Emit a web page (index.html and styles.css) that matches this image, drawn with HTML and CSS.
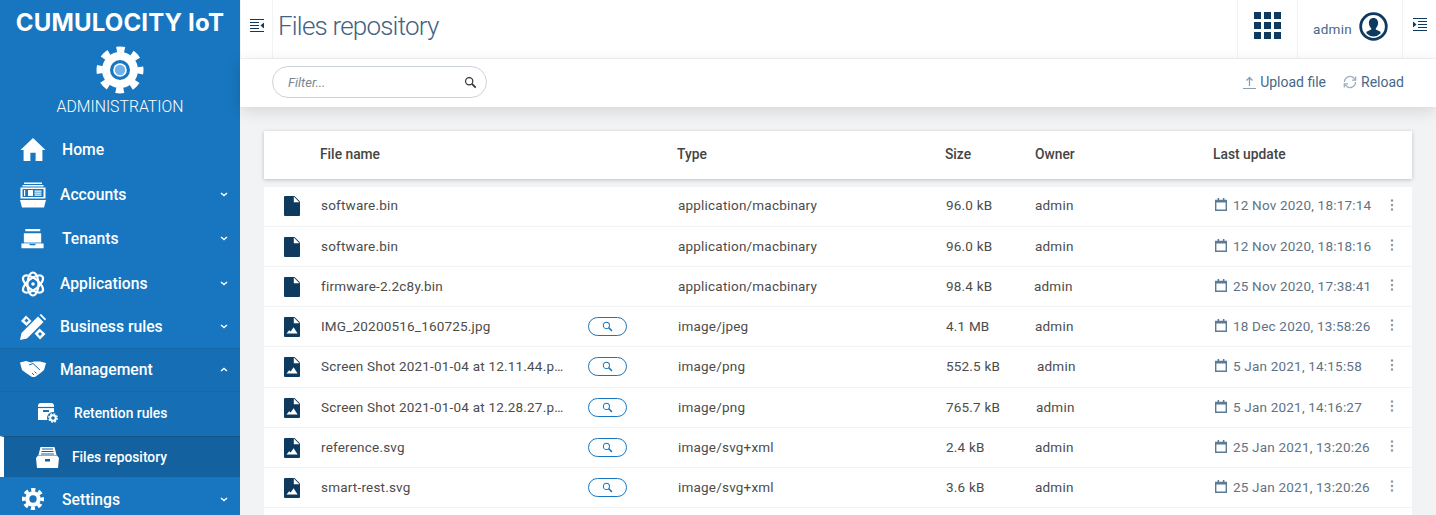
FILE: index.html
```html
<!DOCTYPE html>
<html lang="en">
<head>
    <meta charset="UTF-8">
    <meta name="viewport" content="width=device-width, initial-scale=1.0">
    <title>Files repository</title>
    <link rel="stylesheet" href="styles.css">
</head>
<body>
    <svg class="sprites" width="0" height="0">
        <symbol id="i-file" viewBox="0 0 16 20"><path d="M1 0h9.500L16 5.500V19a1 1 0 0 1-1 1H1a1 1 0 0 1-1-1V1a1 1 0 0 1 1-1z" fill="#0f3a5f"/><path d="M9.800 0.600 15.400 6.200H9.800z" fill="#fff"/></symbol>
        <symbol id="i-image" viewBox="0 0 16 20"><path d="M1 0h9.500L16 5.500V19a1 1 0 0 1-1 1H1a1 1 0 0 1-1-1V1a1 1 0 0 1 1-1z" fill="#0f3a5f"/><path d="M9.800 0.600 15.400 6.200H9.800z" fill="#fff"/><path d="M2.500 16.500l2.700-3.300 1.500 1.300 2.900-4.300 4 6.300z" fill="#fff"/></symbol>
        <symbol id="i-search" viewBox="0 0 14 14"><circle cx="5.600" cy="5.600" r="3.900" fill="none" stroke="currentColor" stroke-width="1.300"/><path d="M8.600 8.600l4 4" stroke="currentColor" stroke-width="1.900"/></symbol>
        <symbol id="i-cal" viewBox="0 0 12 13"><path d="M0.700 2.400h10.600v9.900H0.700z" fill="none" stroke="#5b7a94" stroke-width="1.400"/><path d="M0.700 2h10.600v2.600H0.700zM2.600 0h1.500v2.400H2.600zM7.900 0h1.500v2.400H7.900z" fill="#5b7a94"/></symbol>
        <symbol id="i-dots" viewBox="0 0 4 12"><circle cx="2" cy="1.500" r="1.200"/><circle cx="2" cy="6" r="1.200"/><circle cx="2" cy="10.500" r="1.200"/></symbol>
        <symbol id="i-chev-d" viewBox="0 0 8 5"><path d="M1 1l3 2.600L7 1" fill="none" stroke="#fff" stroke-width="1.400"/></symbol>
        <symbol id="i-chev-u" viewBox="0 0 8 5"><path d="M1 4l3-2.600L7 4" fill="none" stroke="#fff" stroke-width="1.400"/></symbol>
    </svg>

    <aside class="sidebar">
        <div class="brand">
            <div class="brand-name">CUMULOCITY IoT</div>
            <svg class="brand-gear" viewBox="0 0 48 48">
                <circle cx="24" cy="24" r="18" fill="#fff"/>
                <circle cx="24" cy="24" r="20.500" fill="none" stroke="#fff" stroke-width="6" stroke-dasharray="8.100 8" stroke-dashoffset="4.050"/>
                <circle cx="24" cy="24" r="10" fill="#1776bf"/>
                <circle cx="24" cy="24" r="6.800" fill="#fff"/>
                <circle cx="24" cy="24" r="5.200" fill="#6fb2ec"/>
            </svg>
            <div class="brand-app">ADMINISTRATION</div>
        </div>
        <nav class="nav">
            <a class="nav-item h-home">
                <svg class="nav-icon icon-home" viewBox="0 0 24 22"><path d="M12 0L24 11.500H21V22H14.500V14H9.500V22H3V11.500H0z" fill="#fff"/></svg>
                <span class="nav-label label-wide">Home</span>
            </a>
            <a class="nav-item h-acc">
                <svg class="nav-icon" viewBox="0 0 26 25"><path d="M4 0h18v1.500H4zM2.500 2.500h21V4h-21zM0.500 5h25v11H0.500z" fill="#fff"/><path d="M2.500 6.500h21v8h-21z" fill="#1776bf"/><path d="M4 7.500h1.200v6H4zM8 7.500h5v6H8zM14.500 8h7v1.200h-7zM14.500 10h7v1.200h-7zM14.500 12h7v1.200h-7z" fill="#fff"/><path d="M0 17.500h26l-2 7.500H2z" fill="#fff"/></svg>
                <span class="nav-label">Accounts</span>
                <svg class="chev"><use href="#i-chev-d"/></svg>
            </a>
            <a class="nav-item h-ten">
                <svg class="nav-icon" viewBox="-1.500 -1.500 27 24"><path d="M4 0h15.500v2.500H4zM2.500 4.500h18v11h-18zM0 15h7.500l1.500 2h5l1.500-2H23V20H0z" fill="#fff"/><path d="M0.500 14.600h23" stroke="#1776bf" stroke-width="0.800"/></svg>
                <span class="nav-label label-ten">Tenants</span>
                <svg class="chev"><use href="#i-chev-d"/></svg>
            </a>
            <a class="nav-item h-app">
                <svg class="nav-icon" viewBox="0 0 26 26" fill="none" stroke="#fff" stroke-width="2.200"><ellipse cx="13" cy="13" rx="12" ry="5.500" transform="rotate(38 13 13)"/><ellipse cx="13" cy="13" rx="12" ry="5.500" transform="rotate(-38 13 13)"/><ellipse cx="13" cy="13" rx="5.500" ry="11.500"/><circle cx="13" cy="13" r="1.800" fill="#fff" stroke="none"/></svg>
                <span class="nav-label">Applications</span>
                <svg class="chev"><use href="#i-chev-d"/></svg>
            </a>
            <a class="nav-item h-biz">
                <svg class="nav-icon" viewBox="0 0 26 26"><path d="M0 26l1.500-7L18 2.500 23.500 8 7 24.500z" fill="#fff"/><path d="M19.500 1L21 0l5 5-1 1.500z" fill="#fff"/><path d="M1 7L6 1.500l5.500 5.500-5 5zM14.500 19.500l5-5 6 5.500-5.500 5.500z" fill="#fff"/><path d="M4.500 6.500l2-2 2 2-2 2zM18 20l2-2 2 2-2 2z" fill="#1776bf"/></svg>
                <span class="nav-label">Business rules</span>
                <svg class="chev"><use href="#i-chev-d"/></svg>
            </a>
            <div class="nav-group">
                <a class="nav-item h-man">
                    <svg class="nav-icon icon-shake" viewBox="0 0 26 16"><path d="M0 1.500L6 0l5 1.500L14 0.500l6 0 6 1.500-2 7-3.500 3-5.500 4-3 0-6-4-4-3z" fill="#fff"/><path d="M9 4l4-1.500 7 6.500M12 12l2 2M14.500 10.500l2 2" fill="none" stroke="#166fb5" stroke-width="1"/></svg>
                    <span class="nav-label">Management</span>
                    <svg class="chev"><use href="#i-chev-u"/></svg>
                </a>
                <a class="nav-item nav-sub h-ret">
                    <svg class="sub-icon sub-ret" viewBox="0 0 20 20"><path d="M0 3a3 3 0 0 1 3-3h10a3 3 0 0 1 3 3v14H0z" fill="#fff"/><path d="M0 4.500h16" stroke="#1670b6" stroke-width="1.200"/><path d="M5 8h6" stroke="#1670b6" stroke-width="2"/><circle cx="15" cy="15" r="6" fill="#1670b6"/><circle cx="15" cy="15" r="2.800" fill="none" stroke="#fff" stroke-width="2"/><circle cx="15" cy="15" r="4.200" fill="none" stroke="#fff" stroke-width="1.400" stroke-dasharray="1.800 1.500"/></svg>
                    <span class="sub-label">Retention rules</span>
                </a>
                <a class="nav-item nav-sub nav-active h-fil">
                    <svg class="sub-icon sub-fil" viewBox="0 0 23 21"><path d="M4.500 0h14l2 8h-18z" fill="#fff"/><path d="M6 2h11M5.500 4.500h12M5 7h13" stroke="#14619f" stroke-width="1"/><path d="M2 8.500h19l2 2.500-1 10H1L0 11z" fill="#fff"/><path d="M9 12h5v2.500H9z" fill="#14619f"/></svg>
                    <span class="sub-label label-fil">Files repository</span>
                </a>
            </div>
            <a class="nav-item h-set">
                <svg class="nav-icon icon-set" viewBox="0 0 24 24"><circle cx="12" cy="12" r="8.500" fill="#fff"/><circle cx="12" cy="12" r="10" fill="none" stroke="#fff" stroke-width="4" stroke-dasharray="4.500 3.350" stroke-dashoffset="2.250"/><circle cx="12" cy="12" r="4" fill="#1776bf"/></svg>
                <span class="nav-label label-set">Settings</span>
                <svg class="chev"><use href="#i-chev-d"/></svg>
            </a>
        </nav>
    </aside>

    <main class="main">
        <header class="topbar">
            <button class="toggle toggle-left">
                <svg viewBox="0 0 14 13" width="14" height="13"><path d="M0 0.500h14M0 3.500h9M0 6.500h9M0 9.500h9M0 12.500h14" stroke="#0f3a5f" stroke-width="1"/><path d="M14 3.500v6l-3.500-3z" fill="#0f3a5f"/></svg>
            </button>
            <h1 class="page-title">Files repository</h1>
            <button class="top-cell apps-cell">
                <svg viewBox="0 0 27 27" width="27" height="27" fill="#0f3a5f">
                    <rect width="7" height="7"/><rect x="10" width="7" height="7"/><rect x="20" width="7" height="7"/>
                    <rect y="10" width="7" height="7"/><rect x="10" y="10" width="7" height="7"/><rect x="20" y="10" width="7" height="7"/>
                    <rect y="20" width="7" height="7"/><rect x="10" y="20" width="7" height="7"/><rect x="20" y="20" width="7" height="7"/>
                </svg>
            </button>
            <div class="top-cell user-cell">
                <span class="user-name">admin</span>
                <svg viewBox="0 0 29 29" width="29" height="29"><circle cx="14.500" cy="14.500" r="12.800" fill="none" stroke="#0f3a5f" stroke-width="2.800"/><path d="M14.500 6c3 0 4.600 2.300 4.600 5 0 2.200-1 4.200-2.300 5.200v1.300l4.700 2.300v1.800a10 10 0 0 1-14 0v-1.800l4.700-2.300v-1.300c-1.300-1-2.300-3-2.300-5.200 0-2.700 1.600-5 4.600-5z" fill="#0f3a5f"/></svg>
            </div>
            <button class="toggle toggle-right">
                <svg viewBox="0 0 14 13" width="14" height="13"><path d="M0 0.500h14M5 3.500h9M5 6.500h9M5 9.500h9M0 12.500h14" stroke="#0f3a5f" stroke-width="1"/><path d="M0 3.500v6l3.500-3z" fill="#0f3a5f"/></svg>
            </button>
        </header>

        <div class="actionbar">
            <div class="filter">
                <span class="filter-text">Filter...</span>
                <svg class="filter-icon"><use href="#i-search"/></svg>
            </div>
            <div class="actions">
                <a class="action">
                    <svg viewBox="0 0 13 13" width="13" height="13" fill="none" stroke="#8a9fb2"><path d="M6.500 10V1.500M3.500 4.500l3-3 3 3" stroke-width="1.300"/><path d="M0 12.500h13" stroke-width="1"/></svg>
                    Upload file
                </a>
                <a class="action">
                    <svg viewBox="0 0 14 14" width="14" height="14" fill="none" stroke="#9fb0bf" stroke-width="1.300"><path d="M1.500 7a5.500 5.500 0 0 1 9.500-3.800L12.500 5M12.500 7A5.500 5.500 0 0 1 3 10.800L1.500 9"/><path d="M12.700 1.500V5.200H9M1.300 12.500V8.800H5"/></svg>
                    Reload
                </a>
            </div>
        </div>

        <section class="content">
            <div class="cols table-head">
                <span></span>
                <span>File name</span>
                <span></span>
                <span>Type</span>
                <span>Size</span>
                <span>Owner</span>
                <span>Last update</span>
            </div>
            <div class="table-body">
                <div class="cols row row-first">
                    <svg class="file-icon"><use href="#i-file"/></svg>
                    <span class="name">software.bin</span><span></span>
                    <span>application/macbinary</span><span>96.0 kB</span><span>admin</span>
                    <span class="stamp"><svg class="cal"><use href="#i-cal"/></svg>12 Nov 2020, 18:17:14<svg class="dots"><use href="#i-dots"/></svg></span>
                </div>
                <div class="cols row">
                    <svg class="file-icon"><use href="#i-file"/></svg>
                    <span class="name">software.bin</span><span></span>
                    <span>application/macbinary</span><span>96.0 kB</span><span>admin</span>
                    <span class="stamp"><svg class="cal"><use href="#i-cal"/></svg>12 Nov 2020, 18:18:16<svg class="dots"><use href="#i-dots"/></svg></span>
                </div>
                <div class="cols row">
                    <svg class="file-icon"><use href="#i-file"/></svg>
                    <span class="name">firmware-2.2c8y.bin</span><span></span>
                    <span>application/macbinary</span><span>98.4 kB</span><span class="owner-left">admin</span>
                    <span class="stamp"><svg class="cal"><use href="#i-cal"/></svg>25 Nov 2020, 17:38:41<svg class="dots"><use href="#i-dots"/></svg></span>
                </div>
                <div class="cols row">
                    <svg class="file-icon"><use href="#i-image"/></svg>
                    <span class="name">IMG_20200516_160725.jpg</span>
                    <button class="preview"><svg><use href="#i-search"/></svg></button>
                    <span>image/jpeg</span><span>4.1 MB</span><span>admin</span>
                    <span class="stamp"><svg class="cal"><use href="#i-cal"/></svg>18 Dec 2020, 13:58:26<svg class="dots"><use href="#i-dots"/></svg></span>
                </div>
                <div class="cols row row-tall">
                    <svg class="file-icon"><use href="#i-image"/></svg>
                    <span class="name">Screen Shot 2021-01-04 at 12.11.44.png</span>
                    <button class="preview"><svg><use href="#i-search"/></svg></button>
                    <span>image/png</span><span>552.5 kB</span><span class="owner-off2">admin</span>
                    <span class="stamp"><svg class="cal"><use href="#i-cal"/></svg>5 Jan 2021, 14:15:58<svg class="dots"><use href="#i-dots"/></svg></span>
                </div>
                <div class="cols row">
                    <svg class="file-icon"><use href="#i-image"/></svg>
                    <span class="name">Screen Shot 2021-01-04 at 12.28.27.png</span>
                    <button class="preview"><svg><use href="#i-search"/></svg></button>
                    <span>image/png</span><span>765.7 kB</span><span class="owner-off1">admin</span>
                    <span class="stamp"><svg class="cal"><use href="#i-cal"/></svg>5 Jan 2021, 14:16:27<svg class="dots"><use href="#i-dots"/></svg></span>
                </div>
                <div class="cols row">
                    <svg class="file-icon"><use href="#i-image"/></svg>
                    <span class="name">reference.svg</span>
                    <button class="preview"><svg><use href="#i-search"/></svg></button>
                    <span>image/svg+xml</span><span>2.4 kB</span><span>admin</span>
                    <span class="stamp"><svg class="cal"><use href="#i-cal"/></svg>25 Jan 2021, 13:20:26<svg class="dots"><use href="#i-dots"/></svg></span>
                </div>
                <div class="cols row">
                    <svg class="file-icon"><use href="#i-image"/></svg>
                    <span class="name">smart-rest.svg</span>
                    <button class="preview"><svg><use href="#i-search"/></svg></button>
                    <span>image/svg+xml</span><span>3.6 kB</span><span>admin</span>
                    <span class="stamp"><svg class="cal"><use href="#i-cal"/></svg>25 Jan 2021, 13:20:26<svg class="dots"><use href="#i-dots"/></svg></span>
                </div>
                <div class="cols row"></div>
            </div>
        </section>
    </main>
</body>
</html>
```
FILE: styles.css
```css
* {
    box-sizing: border-box;
}
html, body {
    height: 100%;
}
body {
    margin: 0;
    display: flex;
    overflow: hidden;
    font-family: Roboto, "Liberation Sans", sans-serif;
    font-size: 13.5px;
    color: #444;
    background-color: #f2f3f5;
}
button {
    border: none;
    background: none;
    padding: 0;
    font: inherit;
}
.sprites {
    position: absolute;
}

/* sidebar */
.sidebar {
    width: 240px;
    flex: none;
    height: 100%;
    overflow: hidden;
    background-color: #1776bf;
    color: #fff;
}
.brand {
    height: 127px;
    padding-top: 8px;
    display: flex;
    flex-direction: column;
    align-items: center;
}
.brand-name {
    font-family: Inter, sans-serif;
    font-weight: 700;
    font-size: 24px;
    letter-spacing: 0.15px;
    line-height: 29px;
    white-space: nowrap;
}
.brand-gear {
    width: 48px;
    height: 48px;
    margin-top: 9px;
}
.brand-app {
    margin-top: 3px;
    font-size: 15.8px;
    font-weight: 300;
    line-height: 19px;
}
.nav-item {
    display: flex;
    align-items: center;
    padding-left: 20px;
    padding-right: 12px;
}
.h-home { height: 45px; }
.h-acc { height: 45px; }
.h-ten { height: 44px; padding-bottom: 1px; }
.h-app { height: 45px; }
.h-biz { height: 42px; padding-bottom: 1px; }
.h-man { height: 42px; padding-bottom: 2px; }
.h-ret { height: 45px; padding-bottom: 2px; }
.h-fil { height: 41px; }
.h-set { height: 45px; padding-bottom: 1px; }
.nav-icon {
    width: 26px;
    height: 26px;
    flex: none;
}
.icon-home {
    width: 26px;
    height: 23px;
}
.icon-shake {
    height: 18px;
}
.icon-set {
    margin-left: 2px;
    width: 22px;
    height: 22px;
}
.nav-label {
    flex: 1;
    margin-left: 14px;
    font-size: 15.7px;
    font-weight: 500;
}
.label-wide {
    margin-left: 16px;
}
.label-ten {
    margin-left: 16px;
}
.label-set {
    margin-left: 18px;
}
.chev {
    width: 8px;
    height: 5px;
    flex: none;
}
.nav-group {
    background-color: #166fb5;
    border-top: 1px solid #1568a8;
}
.nav-sub {
    border-top: 1px solid #1568a8;
}
.sub-icon {
    flex: none;
}
.sub-ret {
    width: 20px;
    height: 20px;
    margin-left: 18px;
}
.sub-fil {
    width: 23px;
    height: 21px;
    margin-left: 16px;
}
.sub-label {
    margin-left: 16px;
    font-size: 13.8px;
    font-weight: 500;
}
.label-fil {
    margin-left: 13px;
}
.nav-active {
    background-color: #14619f;
    border-left: 4px solid #fff;
    padding-left: 16px;
    border-top-color: #125689;
}

/* top */
.main {
    flex: 1;
    min-width: 0;
    height: 100%;
    display: flex;
    flex-direction: column;
}
.topbar {
    height: 59px;
    flex: none;
    display: flex;
    align-items: stretch;
    background: #fff;
    border-bottom: 1px solid #f2f3f5;
}
.toggle {
    display: flex;
    align-items: center;
    justify-content: center;
}
.toggle-left {
    width: 33px;
    padding-bottom: 8px;
    border-left: 1px solid #f2f3f5;
    border-right: 1px solid #f2f3f5;
}
.toggle-right {
    width: 34px;
    padding-bottom: 9px;
    border-left: 1px solid #f2f3f5;
}
.page-title {
    flex: 1;
    margin: 0 0 0 5px;
    font-size: 26px;
    font-weight: 300;
    letter-spacing: -0.8px;
    line-height: 53px;
    color: #3f6385;
}
.top-cell {
    display: flex;
    align-items: center;
    border-left: 1px solid #f2f3f5;
}
.apps-cell {
    width: 60px;
    justify-content: center;
    padding-bottom: 7px;
}
.user-cell {
    width: 105px;
    padding: 0 0 6px 15px;
    gap: 7px;
}
.user-name {
    margin-top: 6px;
    font-size: 13.5px;
    letter-spacing: 0.3px;
    color: #47688a;
}
.actionbar {
    height: 48px;
    flex: none;
    display: flex;
    align-items: center;
    justify-content: space-between;
    padding: 0 32px 2px;
    background: #fff;
    box-shadow: 0 4px 16px rgba(0, 0, 0, 0.12);
    position: relative;
}
.filter {
    width: 215px;
    height: 32px;
    display: flex;
    align-items: center;
    justify-content: space-between;
    padding: 0 9px 0 15px;
    border: 1px solid #ccd3da;
    border-radius: 16px;
}
.filter-text {
    font-style: italic;
    font-size: 13px;
    color: #7a8791;
}
.filter-icon {
    width: 13px;
    height: 13px;
    color: #333;
}
.actions {
    display: flex;
    gap: 17px;
}
.action {
    display: flex;
    align-items: center;
    gap: 4px;
    font-size: 14px;
    color: #47688a;
}

/* table */
.content {
    flex: 1;
    padding: 24px 24px 0;
}
.cols {
    display: grid;
    grid-template-columns: 36px 268px 89px 268px 90px 178px 1fr;
    align-items: center;
    padding-left: 20px;
    background: #fff;
}
.table-head {
    height: 48px;
    padding-bottom: 2px;
    font-size: 13.8px;
    font-weight: 500;
    color: #444;
    box-shadow: 0 1px 4px rgba(0, 0, 0, 0.22);
}
.table-body {
    margin-top: 8px;
}
.row {
    grid-template-columns: 37px 267px 90px 268px 89px 178px 1fr;
    height: 40px;
    padding-bottom: 2px;
    border-bottom: 1px solid #f2f3f5;
    color: #4c4c4c;
    letter-spacing: 0.2px;
}
.row-first {
    padding-bottom: 3px;
}
.row-tall {
    height: 41px;
    padding-bottom: 3px;
}
.file-icon {
    width: 16px;
    height: 20px;
    margin-top: 2px;
}
.name {
    padding-right: 22px;
    white-space: nowrap;
    overflow: hidden;
    text-overflow: ellipsis;
}
.preview {
    width: 39px;
    height: 19px;
    margin-top: 2px;
    display: flex;
    align-items: center;
    justify-content: center;
    border: 1px solid #1776bf;
    border-radius: 10px;
    color: #1776bf;
}
.preview svg {
    width: 11px;
    height: 11px;
}
.owner-left {
    margin-left: -1px;
}
.owner-off1 {
    margin-left: 1px;
}
.owner-off2 {
    margin-left: 2px;
}
.stamp {
    display: flex;
    align-items: center;
    color: #5f7385;
}
.cal {
    width: 12px;
    height: 13px;
    margin: 0 6px 1px 2px;
}
.dots {
    width: 4px;
    height: 12px;
    margin: 0 18px 1px auto;
    fill: #8898a6;
}
```
